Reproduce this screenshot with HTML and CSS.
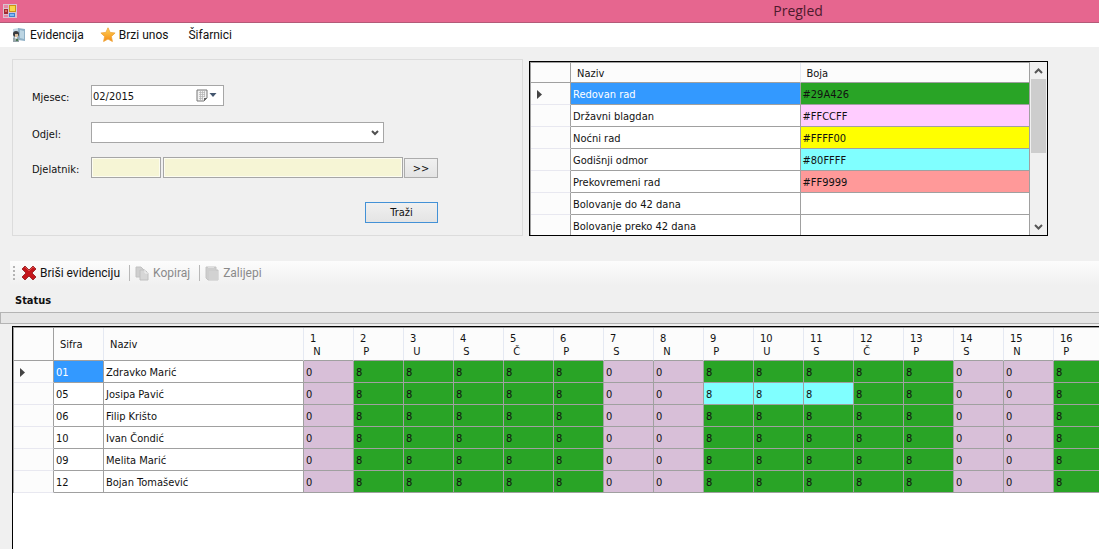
FILE: index.html
```html
<!DOCTYPE html>
<html lang="hr">
<head>
<meta charset="utf-8">
<title>Pregled</title>
<link rel="stylesheet" href="styles.css">
</head>
<body>
<header class="titlebar">
  <svg class="app-icon" width="14" height="14" viewBox="0 0 14 14" aria-hidden="true">
    <rect width="14" height="14" fill="#d9c3cf"/>
    <rect x="1" y="1" width="4" height="3" fill="#e886a6"/>
    <rect x="1" y="5" width="4" height="5" fill="#a02c33"/><rect x="2" y="6" width="2" height="2" fill="#dc6a60"/>
    <rect x="6" y="1" width="7" height="7" fill="#c99416"/><rect x="7" y="2" width="5" height="5" fill="#f9d84c"/>
    <rect x="6" y="9" width="6" height="4" fill="#3f7fd0"/><rect x="7" y="10" width="4" height="2" fill="#7fb8f2"/>
    <rect x="1" y="11" width="4" height="2" fill="#e886a6"/>
  </svg>
  <h1 class="title">Pregled</h1>
</header>

<nav class="menu">
  <button class="menu-item" type="button">
    <svg width="16" height="16" viewBox="0 0 16 16" aria-hidden="true">
      <path d="M2 2l6-1v13l-6-1z" fill="#c3d8e5"/><path d="M7 1l7 1v12l-7-1z" fill="#8fb0c6"/><path d="M9 3l4 1v8l-4-1z" fill="#bcd5e3"/>
      <circle cx="5" cy="7" r="3" fill="#3a3b3f"/><path d="M4 7h3v3H4z" fill="#dcbfa0"/>
      <path d="M2 11q3-2 6 0v4H2z" fill="#96a4aa"/><path d="M4 10l1 3 1-3z" fill="#fff"/><path d="M5 12h2v2H5z" fill="#4b7a52"/>
    </svg>Evidencija</button>
  <button class="menu-item" type="button">
    <svg width="16" height="16" viewBox="0 0 16 16" aria-hidden="true">
      <defs><linearGradient id="star" x2="0" y2="1"><stop stop-color="#ffd65a"/><stop offset="1" stop-color="#f58a12"/></linearGradient></defs>
      <path d="M8 .8l2.100 4.600 5 .6-3.700 3.500 1 5L8 12l-4.400 2.500 1-5L.9 6l5-.6z" fill="url(#star)" stroke="#eda338" stroke-width=".8" stroke-linejoin="round"/>
    </svg>Brzi unos</button>
  <button class="menu-item" type="button">Šifarnici</button>
</nav>

<main class="content">
  <div class="top">
    <form class="filter">
      <div class="field">
        <label for="mjesec">Mjesec:</label>
        <div class="date">
          <input id="mjesec" type="text" value="02/2015">
          <button class="date-button" type="button" aria-label="Kalendar">
            <svg width="22" height="13" viewBox="0 0 22 13" aria-hidden="true">
              <path d="M1 1h10v8l-3 3H1z" fill="#f2f2f2" stroke="#777"/>
              <path d="M3 3.500h6M3 5.500h6M3 7.500h6M3 9.500h4M4.500 2v9M6.500 2v9M8.500 2v6" stroke="#b2b2b2" stroke-width=".7"/>
              <path d="M8 12V9h3z" fill="#666"/><path d="M13.500 4h7L17 8z" fill="#43566e"/>
            </svg>
          </button>
        </div>
      </div>
      <div class="field field-odjel">
        <label for="odjel">Odjel:</label>
        <div class="combo">
          <select id="odjel"><option></option></select>
          <svg class="combo-arrow" width="8" height="6" viewBox="0 0 8 6" aria-hidden="true"><path d="M1 1l3 3 3-3" fill="none" stroke="#505050" stroke-width="2"/></svg>
        </div>
      </div>
      <div class="field field-djelatnik">
        <label for="djelatnik">Djelatnik:</label>
        <input id="djelatnik" class="locked code" type="text" readonly>
        <input class="locked name" type="text" aria-label="Ime djelatnika" readonly>
        <button class="button browse" type="button">&gt;&gt;</button>
      </div>
      <button class="button search" type="submit">Traži</button>
    </form>

    <div class="legend">
      <div class="legend-view">
      <table class="grid legend-grid">
        <colgroup><col class="c-head"><col><col></colgroup>
        <thead><tr><th></th><th>Naziv</th><th>Boja</th></tr></thead>
        <tbody>
          <tr><th><svg class="pointer" width="5" height="9" viewBox="0 0 5 9"><path d="M0 0l5 4.500L0 9z" fill="#444"/></svg></th><td class="selected">Redovan rad</td><td class="work">#29A426</td></tr>
          <tr><th></th><td>Državni blagdan</td><td class="holiday">#FFCCFF</td></tr>
          <tr><th></th><td>Noćni rad</td><td class="night">#FFFF00</td></tr>
          <tr><th></th><td>Godišnji odmor</td><td class="leave">#80FFFF</td></tr>
          <tr><th></th><td>Prekovremeni rad</td><td class="overtime">#FF9999</td></tr>
          <tr><th></th><td>Bolovanje do 42 dana</td><td></td></tr>
          <tr><th></th><td>Bolovanje preko 42 dana</td><td></td></tr>
        </tbody>
      </table>
      </div>
      <div class="scrollbar">
        <svg width="9" height="17" viewBox="0 0 9 17" aria-hidden="true"><path d="M1 11l3.500-3.500L8 11" fill="none" stroke="#555" stroke-width="2"/></svg>
        <div class="thumb"></div>
        <svg class="down" width="9" height="17" viewBox="0 0 9 17" aria-hidden="true"><path d="M1 7l3.500 3.500L8 7" fill="none" stroke="#555" stroke-width="2"/></svg>
      </div>
    </div>
  </div>

  <div class="toolbar">
    <span class="grip"></span>
    <button class="tool" type="button">
      <svg width="16" height="16" viewBox="0 0 16 16" aria-hidden="true"><path d="M4 1l4 4 4-4 3 3-4 4 4 4-3 3-4-4-4 4-3-3 4-4-4-4z" fill="#c4161c" stroke="#8f1518" stroke-width=".8"/><path d="M4 2l4 4 4-4 1.500 1" fill="none" stroke="#dd4a45"/></svg>Briši evidenciju</button>
    <span class="separator"></span>
    <button class="tool" type="button" disabled>
      <svg width="16" height="16" viewBox="0 0 16 16" aria-hidden="true"><path d="M2 2h5l3 3v7H2z" fill="#cfcfcf" stroke="#c2c2c2"/><path d="M6 5h5l3 3v7H6z" fill="#d6d6d6" stroke="#c0c0c0"/><path d="M11 5v3h3" fill="none" stroke="#efefef"/></svg>Kopiraj</button>
    <span class="separator"></span>
    <button class="tool" type="button" disabled>
      <svg width="16" height="16" viewBox="0 0 16 16" aria-hidden="true"><path d="M2 2h10v3h2v10H4l-2-2z" fill="#cdcdcd" stroke="#c4c4c4" stroke-linejoin="round"/><path d="M4 1h6v2H4z" fill="#dedede"/><path d="M5 6h9v9H5z" fill="#d2d2d2"/></svg>Zalijepi</button>
  </div>
  <h2 class="status">Status</h2>
</main>

<div class="splitter"></div>

<section class="sheet">
  <table class="grid sheet-grid">
    <colgroup><col class="c-head"><col class="c-day"><col class="c-name"><col class="c-day" span="16"></colgroup>
    <thead>
      <tr><th></th><th>Sifra</th><th>Naziv</th><th>1<br>&nbsp;N</th><th>2<br>&nbsp;P</th><th>3<br>&nbsp;U</th><th>4<br>&nbsp;S</th><th>5<br>&nbsp;Č</th><th>6<br>&nbsp;P</th><th>7<br>&nbsp;S</th><th>8<br>&nbsp;N</th><th>9<br>&nbsp;P</th><th>10<br>&nbsp;U</th><th>11<br>&nbsp;S</th><th>12<br>&nbsp;Č</th><th>13<br>&nbsp;P</th><th>14<br>&nbsp;S</th><th>15<br>&nbsp;N</th><th>16<br>&nbsp;P</th></tr>
    </thead>
    <tbody>
      <tr><th><svg class="pointer" width="5" height="9" viewBox="0 0 5 9"><path d="M0 0l5 4.500L0 9z" fill="#444"/></svg></th><td class="selected">01</td><td>Zdravko Marić</td><td class="off">0</td><td class="work">8</td><td class="work">8</td><td class="work">8</td><td class="work">8</td><td class="work">8</td><td class="off">0</td><td class="off">0</td><td class="work">8</td><td class="work">8</td><td class="work">8</td><td class="work">8</td><td class="work">8</td><td class="off">0</td><td class="off">0</td><td class="work">8</td></tr>
      <tr><th></th><td>05</td><td>Josipa Pavić</td><td class="off">0</td><td class="work">8</td><td class="work">8</td><td class="work">8</td><td class="work">8</td><td class="work">8</td><td class="off">0</td><td class="off">0</td><td class="leave">8</td><td class="leave">8</td><td class="leave">8</td><td class="work">8</td><td class="work">8</td><td class="off">0</td><td class="off">0</td><td class="work">8</td></tr>
      <tr><th></th><td>06</td><td>Filip Krišto</td><td class="off">0</td><td class="work">8</td><td class="work">8</td><td class="work">8</td><td class="work">8</td><td class="work">8</td><td class="off">0</td><td class="off">0</td><td class="work">8</td><td class="work">8</td><td class="work">8</td><td class="work">8</td><td class="work">8</td><td class="off">0</td><td class="off">0</td><td class="work">8</td></tr>
      <tr><th></th><td>10</td><td>Ivan Čondić</td><td class="off">0</td><td class="work">8</td><td class="work">8</td><td class="work">8</td><td class="work">8</td><td class="work">8</td><td class="off">0</td><td class="off">0</td><td class="work">8</td><td class="work">8</td><td class="work">8</td><td class="work">8</td><td class="work">8</td><td class="off">0</td><td class="off">0</td><td class="work">8</td></tr>
      <tr><th></th><td>09</td><td>Melita Marić</td><td class="off">0</td><td class="work">8</td><td class="work">8</td><td class="work">8</td><td class="work">8</td><td class="work">8</td><td class="off">0</td><td class="off">0</td><td class="work">8</td><td class="work">8</td><td class="work">8</td><td class="work">8</td><td class="work">8</td><td class="off">0</td><td class="off">0</td><td class="work">8</td></tr>
      <tr><th></th><td>12</td><td>Bojan Tomašević</td><td class="off">0</td><td class="work">8</td><td class="work">8</td><td class="work">8</td><td class="work">8</td><td class="work">8</td><td class="off">0</td><td class="off">0</td><td class="work">8</td><td class="work">8</td><td class="work">8</td><td class="work">8</td><td class="work">8</td><td class="off">0</td><td class="off">0</td><td class="work">8</td></tr>
    </tbody>
  </table>
</section>
</body>
</html>
```
FILE: styles.css
```css
* { box-sizing: border-box; }

body {
  margin: 0;
  min-height: 100vh;
  display: flex;
  flex-direction: column;
  overflow-x: hidden;
  background: #f0f0f0;
  color: #111;
  font: 11px/13px "DejaVu Sans Condensed", "Noto Sans", sans-serif;
}

button, input, select { font: inherit; color: inherit; }
svg { display: block; flex: none; }

.titlebar {
  display: flex;
  align-items: center;
  height: 23px;
  padding-left: 3px;
  background: #e6668f;
  border-bottom: 1px solid #b35a78;
}
.title {
  margin: 0 0 0 69%;
  font: 14px/22px "Open Sans", "Noto Sans", sans-serif;
  color: #4d1a2d;
}

.menu {
  display: flex;
  gap: 16px;
  height: 24px;
  padding-left: 11px;
  background: #fff;
}
.menu-item, .tool {
  display: flex;
  align-items: center;
  gap: 3px;
  padding: 0;
  border: 0;
  background: none;
  color: #111;
  font: 12px/16px Roboto, "Noto Sans", sans-serif;
}
.menu-item:last-child { margin-left: 4px; }

.content { display: flex; flex-direction: column; padding-top: 12px; }
.top {
  display: grid;
  grid-template-columns: 511fr 519fr;
  gap: 6px;
  height: 177px;
  padding: 0 51px 0 12px;
}

.filter {
  display: flex;
  flex-direction: column;
  padding: 25px 0 0 19px;
  border: 1px solid #dcdcdc;
}
.field { display: flex; align-items: flex-start; }
.field label { width: 59px; padding-top: 6px; }
.field-odjel { margin-top: 16px; }
.field-djelatnik { margin-top: 14px; }

.date {
  display: flex;
  align-items: center;
  width: 133px;
  height: 21px;
  border: 1px solid #a6a6a6;
  background: #fff;
}
.date input { flex: 1; min-width: 0; padding: 1px 1px 0; border: 0; background: none; outline: 0; }
.date-button { padding: 0 5px 0 0; border: 0; background: none; }

.combo { display: grid; align-items: center; width: 293px; height: 21px; }
.combo select {
  grid-area: 1 / 1;
  width: 100%;
  height: 21px;
  appearance: none;
  border: 1px solid #a6a6a6;
  border-radius: 0;
  background: #fff;
}
.combo-arrow { grid-area: 1 / 1; justify-self: end; margin-right: 5px; pointer-events: none; }

.locked {
  height: 21px;
  border: 1px solid #a6a6a6;
  background: #f6f5d5;
  box-shadow: inset 0 0 0 1px #fcfcf0;
}
.code { width: 70px; margin-right: 2px; }
.name { width: 240px; margin-right: 1px; }
.button {
  padding: 0;
  border: 1px solid #acacac;
  background: linear-gradient(#f0f0f0, #e4e4e4);
}
.browse { width: 34px; height: 20px; margin-top: 1px; }
.search { width: 73px; height: 21px; margin: 24px 0 0 333px; border-color: #4391d6; }

.legend {
  display: flex;
  height: 175px;
  margin-top: 2px;
  overflow: hidden;
  border: 1px solid #000;
  background: #fff;
}
.legend-view { flex: 1; overflow: hidden; }
.grid {
  table-layout: fixed;
  border-spacing: 0;
  border-top: 1px solid #a0a0a0;
  border-left: 1px solid #a0a0a0;
}
.grid th, .grid td {
  height: 22px;
  padding: 1px 2px 0;
  border-right: 1px solid #a0a0a0;
  border-bottom: 1px solid #a0a0a0;
  text-align: left;
  font-weight: normal;
  white-space: nowrap;
}
.grid th { background: #fcfcfc; }
.grid tbody th { border-bottom-color: #e8e8f0; }
.grid thead th { height: 33px; padding-left: 6px; border-right-color: #e5e9f2; }
.grid thead th:first-child { border-right-color: #a0a0a0; }
.grid thead th:last-child { border-right-color: #a0a0a0; }
.legend-grid { width: 100%; }
.legend-grid thead th { height: 20px; }
.pointer { margin-left: 4px; }
.sheet-grid { width: 1091px; }
.c-head { width: 40px; }
.c-day { width: 50px; }
.c-name { width: 200px; }

.grid .selected { background: #3399ff; color: #fff; }
.work { background: #29a426; }
.off { background: #d8bfd8; }
.leave { background: #80ffff; }
.holiday { background: #ffccff; }
.night { background: #ffff00; }
.overtime { background: #ff9999; }

.scrollbar {
  display: flex;
  flex-direction: column;
  align-items: center;
  width: 17px;
  background: #f0f0f0;
}
.thumb { width: 15px; height: 74px; background: #cdcdcd; }
.down { margin-top: auto; }

.toolbar {
  display: flex;
  align-items: center;
  height: 24px;
  margin: 25px 0 0 10px;
  background: linear-gradient(#fcfcfc, #f0f0f0);
}
.grip {
  width: 2px;
  height: 14px;
  margin: 0 6px 0 3px;
  background: repeating-linear-gradient(#b4b4b4 0 2px, transparent 2px 4px);
}
.tool:disabled { color: #8a8a8a; }
.separator { width: 1px; height: 16px; margin: 0 4px 0 9px; background: #b8b8b8; }

.status {
  margin: 0;
  padding: 9px 0 5px 15px;
  font: bold 11px/13px "DejaVu Sans Condensed", "Noto Sans", sans-serif;
}

.splitter {
  height: 12px;
  border: 1px solid #b4b4b4;
  border-right: 0;
  background: #e6e6e6;
}
.sheet {
  flex: 1;
  margin: 2px 0 0 12px;
  overflow: hidden;
  border: solid #000;
  border-width: 1px 0 0 1px;
  background: #fff;
}
```
